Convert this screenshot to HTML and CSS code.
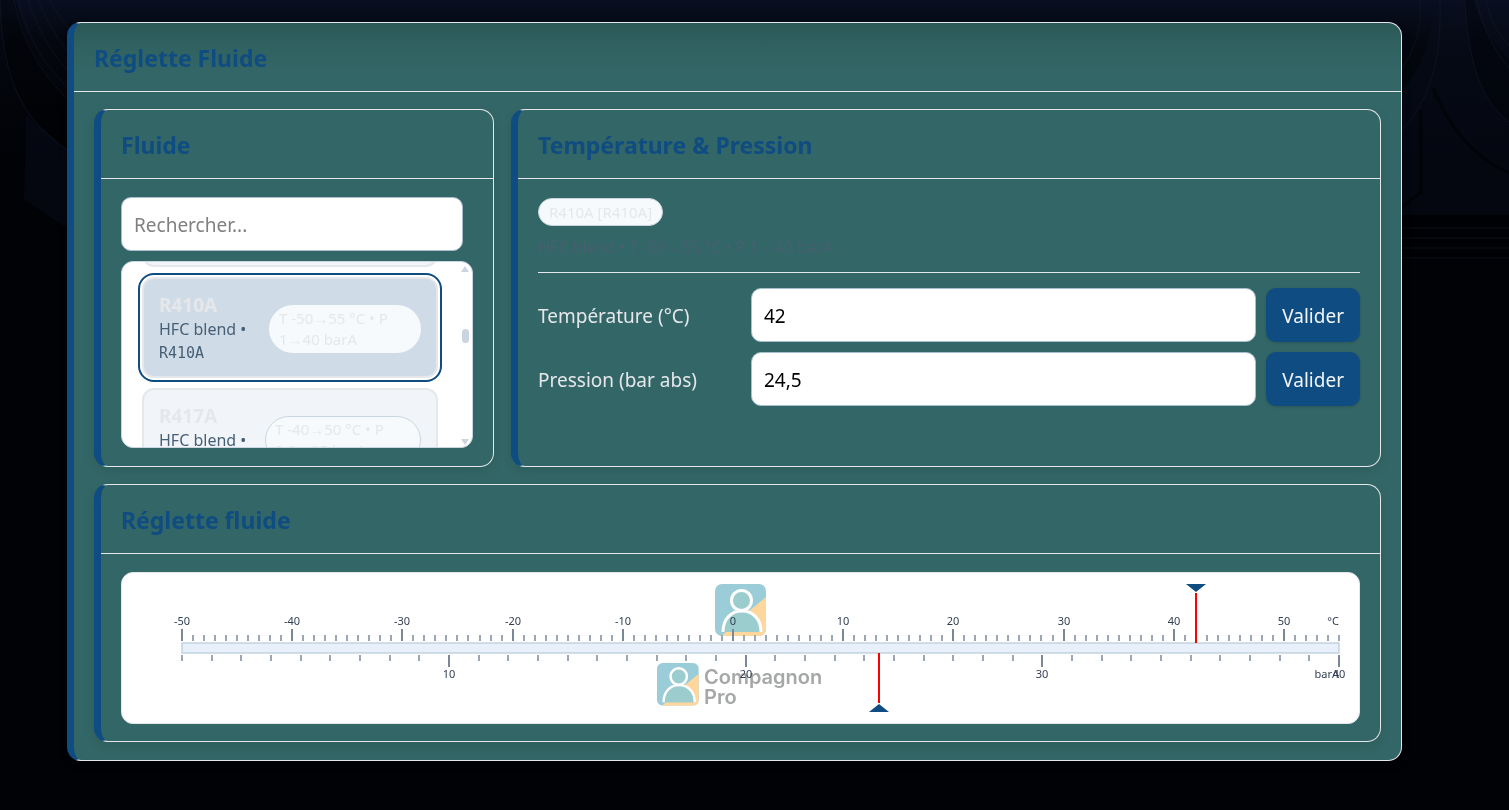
FILE: index.html
```html
<!DOCTYPE html>
<html lang="fr">
<head>
    <meta charset="UTF-8">
    <meta name="viewport" content="width=device-width, initial-scale=1.0">
    <title>Réglette Fluide</title>
    <link rel="stylesheet" href="styles.css">
</head>
<body>
    <svg class="backdrop" viewBox="0 0 1509 810" preserveAspectRatio="xMidYMin slice" aria-hidden="true">
        <path class="panel" d="M26 115 68 150V225H61L24 199z"/>
        <path class="panel" d="M1402 90C1420 70 1434 40 1432 0H1509V215H1402z"/>
        <path class="shade" d="M0 0C2 60 12 110 68 150V100C40 70 24 40 16 0z"/>
        <path class="shade" d="M1465 0C1468 60 1480 100 1509 122V60C1490 40 1478 20 1474 0z"/>
        <path class="shade" d="M1402 215H1509V260H1402z"/>
        <path class="fold" d="M0 0C2 60 12 115 68 150M14 0C22 40 40 72 68 100M18 0C30 44 46 66 68 88M28 0C38 30 50 52 68 70M38 0C48 24 58 40 70 54M50 0C60 20 70 30 80 40"/>
        <path class="fold" d="M1440 0C1442 60 1430 100 1402 130M1420 0C1422 30 1414 50 1402 68M1465 0C1468 60 1480 100 1509 122M1476 0C1484 30 1494 50 1509 68M1486 0C1492 24 1500 36 1509 46"/>
        <path class="fold" d="M1402 228H1509M1402 238H1509M1402 248H1509M1402 258H1509"/>
        <path class="seam" d="M1433 88C1450 130 1475 158 1509 173M1421 110V192L1402 207"/>
    </svg>

    <main class="card card-main">
        <h1 class="card-header">Réglette Fluide</h1>
        <div class="main-body">
            <section class="card">
                <h2 class="card-header">Fluide</h2>
                <div class="card-body">
                    <input class="field search" type="text" placeholder="Rechercher..." aria-label="Rechercher un fluide">
                    <div class="fluid-box">
                        <ul class="fluid-list" id="fluidList">
                            <li>
                                <button class="fluid" type="button">
                                    <span class="fluid-info">
                                        <strong>R407C</strong>
                                        <span>HFC blend •</span>
                                        <code>R407C</code>
                                    </span>
                                    <span class="pill range">T -50→50 °C • P 0,5→25 barA</span>
                                </button>
                            </li>
                            <li>
                                <button class="fluid active" id="activeFluid" type="button" aria-pressed="true">
                                    <span class="fluid-info">
                                        <strong>R410A</strong>
                                        <span>HFC blend •</span>
                                        <code>R410A</code>
                                    </span>
                                    <span class="pill range">T -50→55 °C • P<br>1→40 barA</span>
                                </button>
                            </li>
                            <li>
                                <button class="fluid" type="button">
                                    <span class="fluid-info">
                                        <strong>R417A</strong>
                                        <span>HFC blend •</span>
                                        <code>R417A</code>
                                    </span>
                                    <span class="pill range">T -40→50 °C • P<br>0,8→25 barA</span>
                                </button>
                            </li>
                        </ul>
                        <div class="scrollbar" aria-hidden="true">
                            <svg width="10" height="8" viewBox="0 0 10 8"><path d="M5 1 9 7H1z"/></svg>
                            <span class="thumb"></span>
                            <svg width="10" height="8" viewBox="0 0 10 8"><path d="M1 1h8L5 7z"/></svg>
                        </div>
                    </div>
                </div>
            </section>

            <section class="card">
                <h2 class="card-header">Température &amp; Pression</h2>
                <div class="card-body">
                    <div class="summary">
                        <span class="pill">R410A [R410A]</span>
                        <p class="meta">HFC blend • T -50→55 °C • P 1→40 barA</p>
                    </div>
                    <form class="values" onsubmit="return false">
                        <label for="temperature">Température (°C)</label>
                        <input class="field" type="text" id="temperature" value="42">
                        <button class="btn" type="submit">Valider</button>
                        <label for="pressure">Pression (bar abs)</label>
                        <input class="field" type="text" id="pressure" value="24,5">
                        <button class="btn" type="submit">Valider</button>
                    </form>
                </div>
            </section>

            <section class="card card-wide">
                <h2 class="card-header">Réglette fluide</h2>
                <div class="card-body">
                    <div class="ruler">
                        <svg viewBox="0 0 1237 150" role="img" aria-label="Réglette température et pression">
                            <defs>
                                <clipPath id="logoClip"><rect width="51" height="52" rx="7"/></clipPath>
                                <g id="logo">
                                    <g clip-path="url(#logoClip)">
                                        <rect width="51" height="52" fill="#9acdd7"/>
                                        <path d="M51 13 34 27 48 48H11L6 52H51z" fill="#ffd79c"/>
                                        <path d="M8 48C8 35 16 28 27 28S46 35 46 48z" fill="#9bcdce"/>
                                    </g>
                                    <circle cx="26.500" cy="16.500" r="10" fill="#9bcdce" stroke="#fff" stroke-width="3"/>
                                    <path d="M8 48C8 35 16 27 27 27S46 35 46 48" fill="none" stroke="#fff" stroke-width="3"/>
                                </g>
                            </defs>
                            <use href="#logo" x="593" y="11"/>
                            <use href="#logo" transform="translate(535 90) scale(.82)"/>
                            <text class="brand" x="582" y="111">Compagnon</text>
                            <text class="brand" x="582" y="131">Pro</text>
                            <rect class="bar-edge" x="59" y="69" width="1159" height="12"/>
                            <rect class="bar" x="60.500" y="70.500" width="1156" height="9"/>
                            <g id="scale"></g>
                            <text class="unit" x="1217" y="52">°C</text>
                            <text class="unit" x="1217" y="105">barA</text>
                            <g id="cursors"></g>
                        </svg>
                    </div>
                </div>
            </section>
        </div>
    </main>

    <script>
        const START = 60;
        const LENGTH = 1157;
        const scale = document.getElementById('scale');
        const cursors = document.getElementById('cursors');

        function add(parent, name, attributes, text) {
            const el = document.createElementNS('http://www.w3.org/2000/svg', name);
            for (const key in attributes) {
                el.setAttribute(key, attributes[key]);
            }
            if (text !== undefined) {
                el.textContent = text;
            }
            parent.appendChild(el);
        }

        function position(value, min, max) {
            return Math.round(START + (value - min) / (max - min) * LENGTH);
        }

        // Temperature ticks stand above the bar, pressure ticks hang below it
        function drawScale(min, max, above) {
            for (let value = min; value <= max; value++) {
                const x = position(value, min, max);
                const major = value % 10 === 0;
                const height = major ? 12 : 6;
                const y = above ? 68 - height : 82;
                add(scale, 'rect', { x: x - 1, y: y, width: 2, height: height, class: major ? 'tick major' : 'tick' });
                if (major) {
                    add(scale, 'text', { x: x, y: above ? 52 : 105, class: 'tick-label' }, value);
                }
            }
        }

        function drawCursor(x, above) {
            add(cursors, 'rect', { x: x - 1, y: above ? 20 : 80, width: 2, height: 50, class: 'cursor-line' });
            const points = above
                ? `${x - 10},11 ${x + 10},11 ${x},19`
                : `${x - 10},139 ${x + 10},139 ${x},131`;
            add(cursors, 'polygon', { points: points, class: 'cursor-head' });
        }

        drawScale(-50, 55, true);
        drawScale(1, 40, false);
        drawCursor(position(42, -50, 55), true);
        drawCursor(position(24.5, 1, 40), false);

        // Keep the selected fluid in view
        const list = document.getElementById('fluidList');
        list.scrollTop = document.getElementById('activeFluid').offsetTop - 15;
    </script>
</body>
</html>
```
FILE: styles.css
```css
* {
    box-sizing: border-box;
}

body {
    margin: 0;
    min-height: 100vh;
    padding: 22px 107px 49px 67px;
    background-color: #010206;
    background-image: linear-gradient(#080f20, #04070f 40px, #010206 160px);
    background-repeat: no-repeat;
    color: #e5e7eb;
    font-family: "Segoe UI", "Noto Sans", sans-serif;
    font-size: 19px;
}

button,
input {
    font: inherit;
}

/* Faint stage curtains behind the page */
.backdrop {
    position: fixed;
    inset: 0;
    z-index: -1;
    width: 100%;
    height: 100%;
}

.backdrop .panel {
    fill: #0a1020;
    fill-opacity: 0.4;
}

.backdrop .shade {
    fill: #000;
    fill-opacity: 0.3;
}

.backdrop .fold {
    fill: none;
    stroke: #1c2536;
    stroke-opacity: 0.35;
}

.backdrop .seam {
    fill: none;
    stroke: #000;
    stroke-opacity: 0.5;
    stroke-width: 3;
}

.card {
    border: 1px solid #e5e7eb;
    border-left: 7px solid #0f4c81;
    border-radius: 14px;
    background-color: #336666;
    box-shadow: 0 4px 12px rgba(0, 0, 0, 0.08);
    min-width: 0;
}

.card-main {
    background-image: linear-gradient(rgba(0, 0, 0, 0.15), rgba(0, 0, 0, 0.04) 25px, transparent 50px);
}

.card-header {
    margin: 0;
    padding: 19px 20px 17px;
    border-bottom: 1px solid #e5e7eb;
    color: #0f4c81;
    font-size: 23px;
    font-weight: 700;
    line-height: 32px;
}

.main-body {
    display: grid;
    grid-template-columns: 400fr 870fr;
    gap: 17px;
    padding: 17px 20px 18px;
}

.card-wide {
    grid-column: 1 / -1;
}

.card-body {
    padding: 18px 20px;
}

.card-wide .card-body {
    padding-bottom: 17px;
}

.field {
    width: 100%;
    min-width: 0;
    height: 54px;
    padding: 2px 12px 0;
    border: 1px solid #a9bfd0;
    border-radius: 10px;
    background: #fff;
    color: #000;
}

.field::placeholder {
    color: #808080;
}

.search {
    display: block;
    width: calc(100% - 10px);
    margin-bottom: 10px;
}

.fluid-box {
    position: relative;
    height: 187px;
    border: 1px solid #cbd5e1;
    border-radius: 12px;
    background: #fff;
    overflow: hidden;
}

.fluid-list {
    display: flex;
    flex-direction: column;
    gap: 10px;
    height: 100%;
    margin: 0;
    padding: 20px 34px 20px 20px;
    list-style: none;
    overflow-y: auto;
    scrollbar-width: none;
}

.fluid {
    display: flex;
    align-items: center;
    justify-content: space-between;
    width: 100%;
    height: 101px;
    padding: 13px 15px 11px;
    border: 2px solid #e5e7eb;
    border-radius: 12px;
    background: #f1f5f9;
    color: #e5e7eb;
    text-align: left;
    cursor: pointer;
}

.fluid.active {
    background: #cfdbe6;
    outline: 2px solid #0f4c81;
    outline-offset: 2px;
}

.fluid-info {
    display: flex;
    flex-direction: column;
    color: #475f75;
    font-size: 16px;
    line-height: 24px;
    white-space: nowrap;
}

.fluid-info strong {
    color: #e5e7eb;
    font-size: 19px;
}

.fluid-info code {
    font-family: Consolas, "DejaVu Sans Mono", monospace;
    font-size: 15px;
}

.pill {
    display: inline-block;
    padding: 2px 10px;
    border: 1px solid #cbd5e1;
    border-radius: 24px;
    background: #f6fafd;
    color: #e5e7eb;
    font-size: 15px;
    line-height: 22px;
}

.range {
    flex: 0 0 156px;
    padding: 2px 9px;
    line-height: 21px;
}

.active .range {
    flex-basis: 152px;
    border-color: transparent;
}

.scrollbar {
    position: absolute;
    top: 3px;
    right: 1px;
    bottom: 1px;
    display: flex;
    flex-direction: column;
    align-items: center;
    width: 12px;
    fill: #cbd5e1;
}

.thumb {
    width: 7px;
    height: 14px;
    margin: 56px 0 auto;
    border-radius: 4px;
    background: #cbd5e1;
}

.summary {
    padding: 1px 0 13px;
    border-bottom: 1px solid #e5e7eb;
}

.summary .pill {
    display: block;
    width: fit-content;
}

.meta {
    margin: 9px 0 0;
    color: #475f70;
    font-size: 16px;
    line-height: 24px;
}

.values {
    display: grid;
    grid-template-columns: 203px 1fr auto;
    align-items: center;
    gap: 10px;
    padding: 15px 0 41px;
}

.values label {
    padding-top: 2px;
}

.btn {
    height: 54px;
    padding: 2px 16px 0;
    border: 0;
    border-radius: 10px;
    background: #0f4c81;
    color: #f1f5f9;
    box-shadow: 0 1px 3px rgba(0, 0, 0, 0.15);
    cursor: pointer;
}

.ruler {
    border: 1px solid #e5e7eb;
    border-radius: 12px;
    background: #fff;
    overflow: hidden;
}

.ruler svg {
    display: block;
    width: 100%;
    height: auto;
}

.bar-edge {
    fill: #d5e1ea;
}

.bar {
    fill: #e8f1fb;
    stroke: #c7d7e4;
}

.tick {
    fill: #9ca6b4;
}

.tick.major {
    fill: #7b8797;
}

.tick-label,
.unit {
    fill: #334155;
    font-size: 11px;
    text-anchor: middle;
}

.unit {
    text-anchor: end;
}

.brand {
    fill: #a5a8a7;
    font-family: Inter, sans-serif;
    font-size: 20px;
    font-weight: 600;
}

.cursor-line {
    fill: #f00;
}

.cursor-head {
    fill: #0f4c81;
}
```
